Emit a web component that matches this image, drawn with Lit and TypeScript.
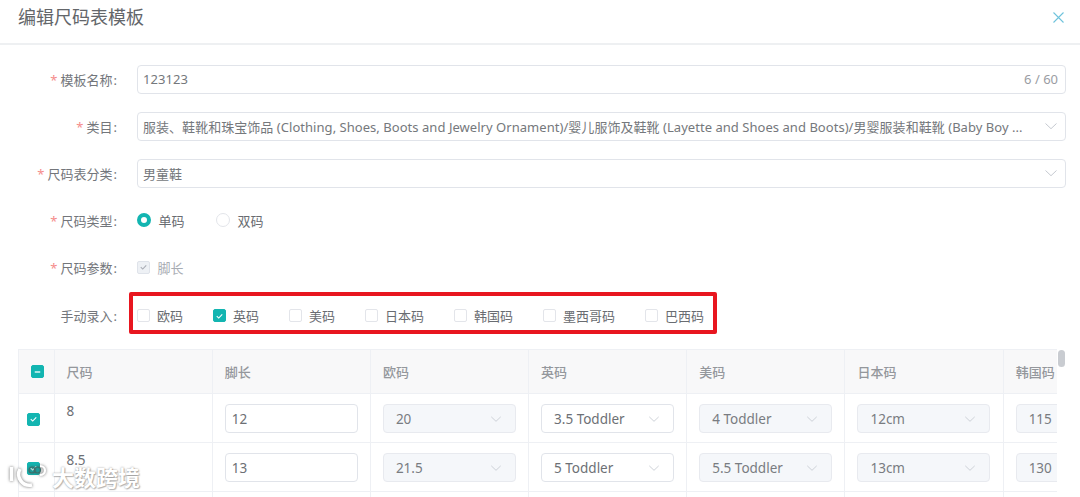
import { LitElement, html, css } from "lit";
import { customElement } from "lit/decorators.js";

const chevron = html`<svg class="chev" width="14" height="14" viewBox="0 0 14 14"><path d="M1.5 4.5 L7 9.7 L12.5 4.5" fill="none" stroke="#c6cad1" stroke-width="1"/></svg>`;
const tick = html`<svg width="14" height="14" viewBox="0 0 14 14"><path d="M3.5 7.2 L6 9.6 L10.5 4.8" fill="none" stroke="currentColor" stroke-width="1.4"/></svg>`;

const codes: [string, boolean][] = [["欧码", false], ["英码", true], ["美码", false], ["日本码", false], ["韩国码", false], ["墨西哥码", false], ["巴西码", false]];
const rows = [
  { size: "8", foot: "12", vals: ["20", "3.5 Toddler", "4 Toddler", "12cm", "115"] },
  { size: "8.5", foot: "13", vals: ["21.5", "5 Toddler", "5.5 Toddler", "13cm", "130"] },
];

@customElement("app-root")
export class AppRoot extends LitElement {
  static styles = css`
    :host { display: block; width: 1080px; height: 497px; overflow: hidden; position: relative; background: #fff;
      font-family: "Noto Sans", "Noto Sans CJK SC", sans-serif; font-size: 13px; color: #6d7075; }
    .head { height: 34px; padding: 0 16px 9px 18px; border-bottom: 2px solid #eef0f2; display: flex; align-items: center; justify-content: space-between; }
    .title { font-size: 18px; color: #63666a; line-height: 24px; }
    .close { display: block; }
    .form { padding: 20px 14px 0 0; display: flex; flex-direction: column; gap: 19px; }
    .row { display: flex; align-items: center; height: 28px; }
    .row.manual { margin-top: 1px; }
    .label { width: 118px; text-align: right; flex: none; margin-right: 19px; color: #73767b; white-space: nowrap; }
    .colon { margin: 0 1px 0 1px; }
    .star { color: #f58b8b; margin-right: 3px; }
    .field { flex: 1; min-width: 0; height: 29px; box-sizing: border-box; border: 1px solid #e1e4ea; border-radius: 4px; display: flex; align-items: center; justify-content: space-between; padding: 0 7px 0 5px; }
    .field .v { white-space: nowrap; overflow: hidden; color: #75787c; letter-spacing: 0.04px; }
    .count { color: #9a9da3; font-size: 13px; }
    .opts { display: flex; align-items: center; margin-left: -0.5px; }
    .radio { width: 14px; height: 14px; border-radius: 50%; box-sizing: border-box; border: 1px solid #e3e5ea; margin-right: 8px; flex: none; }
    .radio.on { border: 4px solid #13b5b1; background: #fff; }
    .opt { display: flex; align-items: center; margin-right: 31px; color: #696c71; }
    .cb { width: 13px; height: 13px; box-sizing: border-box; border: 1px solid #e3e5ea; border-radius: 2px; display: flex; align-items: center; justify-content: center; flex: none; background: #fff; color: #fff; }
    .cb.on { background: #13b5b1; border-color: #13b5b1; }
    .cb.dis { background: #eef1f5; border-color: #dfe3ea; color: #a9adb5; }
    .cb svg { width: 12px; height: 12px; }
    .dis-t { color: #a9adb3; margin-left: 8px; }
    .red { margin: 0 0 5px -8px; width: 588px; height: 42px; box-sizing: border-box; border: 4px solid #e8161f; border-radius: 2px; display: flex; align-items: center; padding: 6px 0 0 4px; flex: none; }
    .red .opt { margin-right: 0; flex: none; }
    .red .t { margin-left: 7px; }
    .o1, .o2, .o3 { width: 76px; } .o4, .o5 { width: 89px; } .o6 { width: 102px; } .o7 { width: 60px; }
    .tablewrap { position: absolute; left: 18px; top: 349px; width: 1039px; overflow: hidden; border-left: 1px solid #eef0f4; border-top: 1px solid #eef0f4; box-sizing: border-box; }
    .grid { display: grid; grid-template-columns: 35.5px repeat(7, 158.2px); width: 1100px; }
    .th { height: 44px; background: #f8f8f9; border-right: 1px solid #eef0f4; border-bottom: 1px solid #eef0f4; display: flex; align-items: center; padding-left: 12px; font-weight: 500; color: #94979c; font-size: 13px; box-sizing: border-box; }
    .td { height: 49px; box-sizing: border-box; border-right: 1px solid #eef0f4; border-bottom: 1px solid #eef0f4; padding: 10px 0 0 12px; font-size: 13.5px; }
    .th.c0, .td.c0 { padding: 0; justify-content: center; display: flex; align-items: center; }
    .th.c0 .cb { margin-left: 2px; }
    .td.c0 .cb { margin: 2px 0 0 -6px; }
    .size { line-height: 18px; margin-top: -2px; color: #6d7075; font-size: 13.5px; }
    .inp { width: 133px; height: 29px; box-sizing: border-box; border: 1px solid #e1e4ea; border-radius: 4px; display: flex; align-items: center; justify-content: space-between; padding: 0 13px 0 12px; white-space: nowrap; overflow: hidden; }
    .inp.plain { padding-left: 6px; }
    .inp.dim { background: #f5f7fa; color: #797c81; border-color: #e8eaef; }
    .inp svg { width: 12px; height: 12px; flex: none; }
    .bar { position: absolute; left: 1058px; top: 350px; width: 7px; height: 17px; border-radius: 4px; background: #c9ccd1; }
    .mark { position: absolute; left: 8px; top: 462px; display: flex; align-items: center; gap: 4px; color: #fff; font-size: 22px; font-weight: 700; line-height: 30px; text-shadow: 0 0 2px rgba(90,90,90,.6), 1px 1px 1px rgba(90,90,90,.35); pointer-events: none; }
    .mark svg { flex: none; filter: drop-shadow(0 0 1.5px rgba(70,70,70,.8)); }
  `;

  render() {
    const lbl = (t: string, req = true) => html`<div class="label">${req ? html`<span class="star">*</span>` : ""}${t}<span class="colon">:</span></div>`;
    return html`
      <div class="head">
        <div class="title">编辑尺码表模板</div>
        <svg class="close" width="11" height="11" viewBox="0 0 11 11"><path d="M.5 .5 L10.5 10.5 M10.5 .5 L.5 10.5" stroke="#6fc3dc" stroke-width="1.1" fill="none"/></svg>
      </div>
      <div class="form">
        <div class="row">${lbl("模板名称")}<div class="field"><span class="v">123123</span><span class="count">6 / 60</span></div></div>
        <div class="row">${lbl("类目")}<div class="field"><span class="v">服装、鞋靴和珠宝饰品 (Clothing, Shoes, Boots and Jewelry Ornament)/婴儿服饰及鞋靴 (Layette and Shoes and Boots)/男婴服装和鞋靴 (Baby Boy ...</span>${chevron}</div></div>
        <div class="row">${lbl("尺码表分类")}<div class="field"><span class="v">男童鞋</span>${chevron}</div></div>
        <div class="row">${lbl("尺码类型")}<div class="opts">
          <div class="opt"><span class="radio on"></span>单码</div>
          <div class="opt"><span class="radio"></span>双码</div>
        </div></div>
        <div class="row">${lbl("尺码参数")}<div class="opts"><span class="cb dis">${tick}</span><span class="dis-t">脚长</span></div></div>
        <div class="row manual">${lbl("手动录入", false)}<div class="red">
          ${codes.map(([t, on], i) => html`<div class="opt o${i + 1}"><span class="cb ${on ? "on" : ""}">${on ? tick : ""}</span><span class="t">${t}</span></div>`)}
        </div></div>
      </div>
      <div class="tablewrap"><div class="grid">
        <div class="th c0"><span class="cb on"><svg viewBox="0 0 12 12"><path d="M3 6 H9" stroke="#fff" stroke-width="1.4"/></svg></span></div>
        <div class="th">尺码</div><div class="th">脚长</div>
        ${codes.slice(0, 5).map(([t]) => html`<div class="th">${t}</div>`)}
        ${rows.map((r) => html`
          <div class="td c0"><span class="cb on">${tick}</span></div>
          <div class="td"><div class="size">${r.size}</div></div>
          <div class="td"><div class="inp plain">${r.foot}</div></div>
          ${r.vals.map((v, i) => html`<div class="td"><div class="inp ${i === 1 ? "" : "dim"}">${v}${chevron}</div></div>`)}
        `)}
        ${Array.from({ length: 8 }, () => html`<div class="td"></div>`)}
      </div></div>
      <div class="bar"></div>
      <div class="mark">
        <svg width="40" height="30" viewBox="0 0 40 30" fill="none" stroke="#fff" stroke-width="3.5"><path d="M3.5 5 V19"/><path d="M12 7 A11 11 0 0 0 24 23"/><circle cx="24" cy="8" r="3" stroke="#3c6f6c" stroke-width="1.2"/><circle cx="29.5" cy="8" r="3" stroke="#3c6f6c" stroke-width="1.2"/><path d="M32 4 A5 4.5 0 1 1 32 13" stroke-width="2.2"/></svg>
        <span>大数跨境</span>
      </div>
    `;
  }
}
